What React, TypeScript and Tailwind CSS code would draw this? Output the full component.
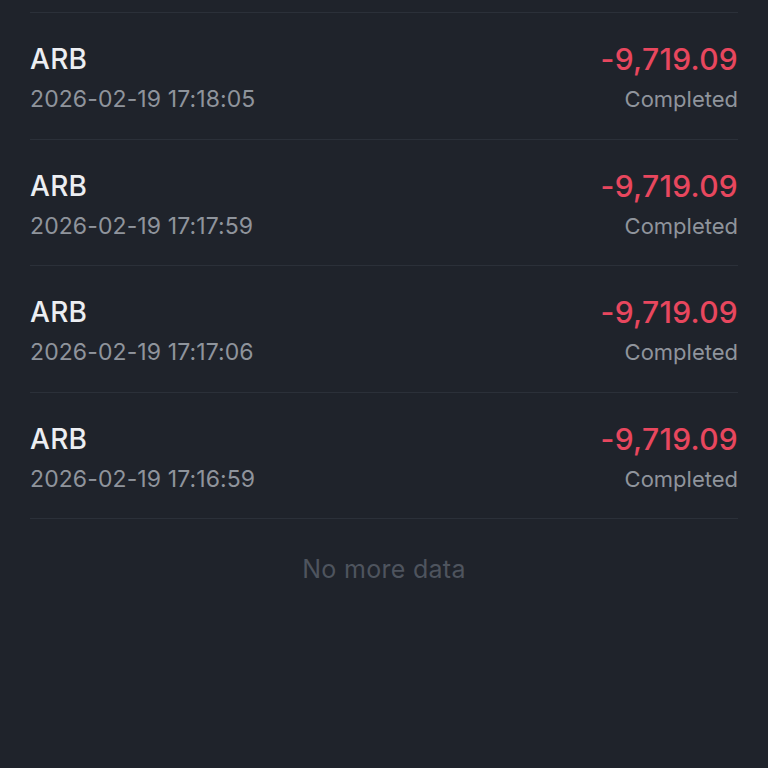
const rows = [
  { date: "2026-02-19 17:18:05" },
  { date: "2026-02-19 17:17:59" },
  { date: "2026-02-19 17:17:06" },
  { date: "2026-02-19 17:16:59" },
];

export default function App() {
  return (
    <main
      className="h-[768px] w-[768px] overflow-hidden bg-[#1f232b] px-[30px]"
      style={{ fontFamily: "Inter, 'Noto Sans', sans-serif" }}
    >
      <div className="h-[12px]" />
      <div className="border-b border-[#2b3039]">
        {rows.map((r, i) => (
          <div key={i} className="flex h-[126.5px] items-start justify-between border-t border-[#2b3039] pt-[29px]">
            <div className="flex flex-col">
              <span className="text-[28px] font-medium leading-[34px] tracking-[0.3px] text-[#eceef2]">ARB</span>
              <span className="mt-[8px] text-[23px] leading-[30px] tracking-[0.1px] text-[#8f949c]">{r.date}</span>
            </div>
            <div className="flex flex-col items-end">
              <span className="text-[30px] font-medium leading-[34px] tracking-[0.3px] text-[#e8475e]">-9,719.09</span>
              <span className="mt-[8px] text-[22px] leading-[30px] text-[#8f949c]">Completed</span>
            </div>
          </div>
        ))}
      </div>
      <p className="pt-[34px] text-center text-[25px] leading-[32px] tracking-[0.3px] text-[#4e545e]">No more data</p>
    </main>
  );
}
